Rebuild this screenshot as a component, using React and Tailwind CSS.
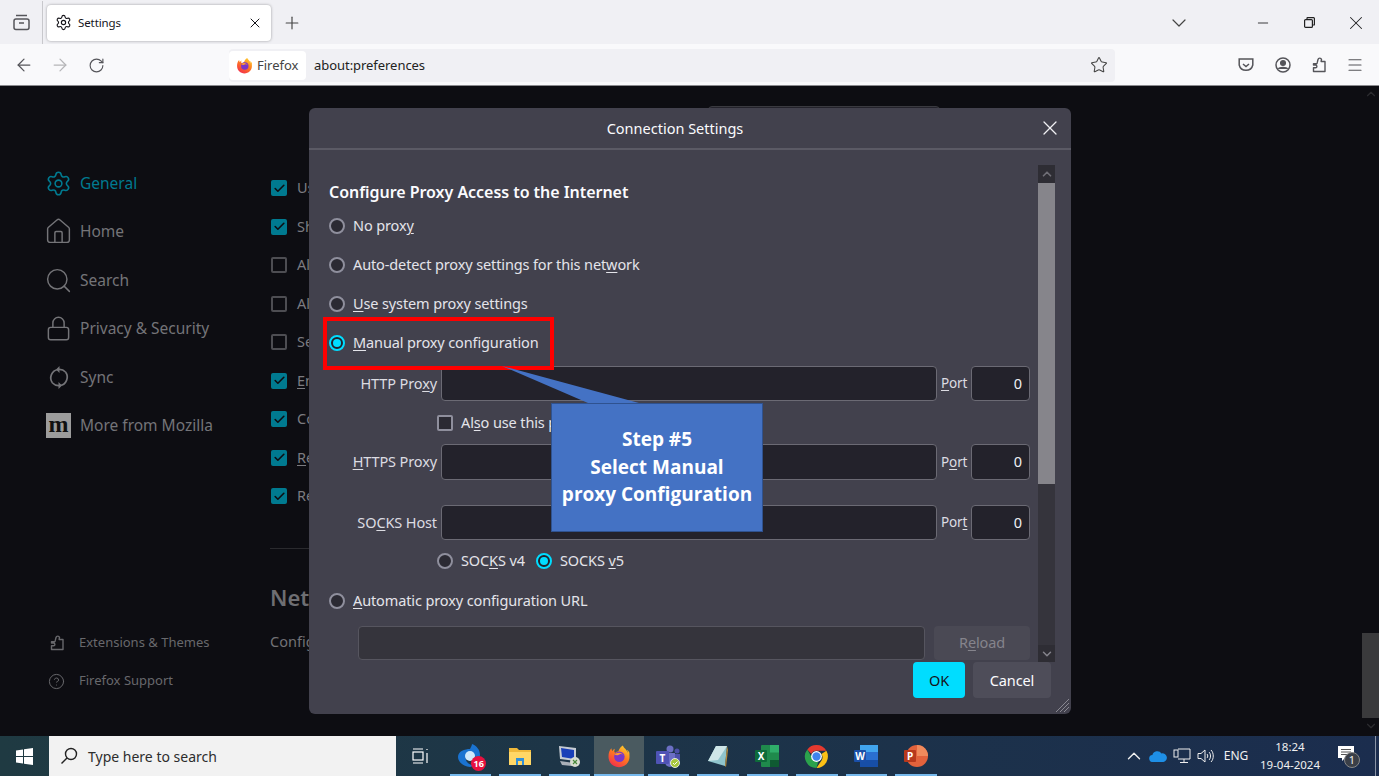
import React from "react";
import { Settings, House, Search, Lock, CircleHelp, X, Plus, ArrowLeft, ArrowRight, RotateCw, Star, ChevronDown, ChevronUp, Minus, Menu, Check } from "lucide-react";

const F = "font-['Noto_Sans',sans-serif]";
const BODY = "text-[14.500px] tracking-[-0.120px]";

function U({ children }) {
  return <span className="underline underline-offset-2 decoration-1">{children}</span>;
}

function PuzzleIcon({ size = 16, className = "", stroke = 1.4 }) {
  return (
    <svg className={`shrink-0 ${className}`} width={size} height={size} viewBox="0 0 16 16" fill="none" stroke="currentColor" strokeWidth={stroke} strokeLinejoin="round">
      <path d="M6.500 4.500 7 2.500a1.800 1.800 0 0 1 3.500 0l-.4 2H14v10H2.500v-3.700h2a1.400 1.400 0 0 0 0-2.800h-2V6.800h2.800c.8 0 1.100-.8 1.200-2.300z" />
    </svg>
  );
}

function SyncIcon() {
  return (
    <svg className="shrink-0" width="24" height="25" viewBox="0 0 24 25" fill="none" stroke="currentColor" strokeWidth="1.700">
      <path d="M18.500 7A8.500 8.500 0 0 0 11 4.500 8.500 8.500 0 0 0 5.500 18" />
      <path d="M5.500 18A8.500 8.500 0 0 0 13 20.500 8.500 8.500 0 0 0 18.500 7" />
      <path d="M12.500 1 9 4.500 12.500 8zM11.500 17l3.500 3.500-3.500 3.500z" fill="currentColor" stroke="none" />
    </svg>
  );
}

function FirefoxLogo({ size = 18, id = "a" }) {
  return (
    <svg className="shrink-0" width={size} height={size} viewBox="0 0 32 32">
      <defs>
        <linearGradient id={`ff${id}`} x1="0.8" y1="0" x2="0.2" y2="1">
          <stop offset="0" stopColor="#ffd02e" />
          <stop offset="0.45" stopColor="#ff7a1f" />
          <stop offset="1" stopColor="#f2294f" />
        </linearGradient>
      </defs>
      <path d="M30 12c-.7-1.800-2.200-3.700-3.400-4.300.9 1.800 1.500 3.400 1.700 4.600C26.500 7.600 22.700 5.800 21 2c-4 2.400-5.500 6.200-5.700 7.800-1.500.1-3 .8-3.800 1.800-.9-.6-1.200-.5-1.700-.7-.1-1.200-.1-2.600.6-4.500-1.800.9-3 2.500-3.400 3.300-.8-1-1-2.800-.9-3.900C3.300 8.100 2 12 2 17c0 7.800 6.300 14 14 14s14-6.200 14-14c0-1.700-.2-3.500-.1-5z" fill={`url(#ff${id})`} />
      <circle cx="16.500" cy="17" r="7" fill="#7a36c9" />
      <path d="M10 14c2-2 5-3.200 8-2 3 1.200 5 3.500 5 6 0-3-2.500-5-5.500-4.500-2 .4-2.500 1.500-4 1.500s-2.500-.5-3.500-1z" fill="#ff9a2e" />
    </svg>
  );
}

function Radio({ on }) {
  return (
    <span className={`w-4 h-4 rounded-full shrink-0 flex items-center justify-center border-2 ${on ? "border-[#00ddff] bg-[#23222b]" : "border-[#8f8f9d] bg-[#2b2a33]"}`}>
      {on && <span className="w-2 h-2 rounded-full bg-[#00ddff]" />}
    </span>
  );
}

function RadioRow({ on, children, className = "" }) {
  return (
    <div className={`h-6 flex items-center gap-2 text-[#e4e4ea] ${BODY} ${className}`}>
      <Radio on={on} />
      <span>{children}</span>
    </div>
  );
}

function ProxyRow({ label, port, className = "" }) {
  return (
    <div className={`flex items-center text-[#dcdce2] ${BODY} ${className}`}>
      <span className="w-[108px] text-right shrink-0 whitespace-nowrap">{label}</span>
      <span className="ml-1 w-[496px] h-full bg-[#23222b] border border-[#6b6a74] rounded-[4px] shrink-0" />
      <span className="ml-1 w-[26px] shrink-0 text-[13.500px] whitespace-nowrap">{port}</span>
      <span className="ml-1 w-[59px] h-full bg-[#23222b] border border-[#6b6a74] rounded-[4px] shrink-0 flex items-center justify-end pr-[7px] text-[#f0f0f4]">0</span>
    </div>
  );
}

function BgCheck({ on, children, className = "" }) {
  return (
    <div className={`h-6 flex items-center gap-[10px] text-[14.500px] text-[#7b7b80] whitespace-nowrap ${className}`}>
      <span className={`w-4 h-4 rounded-[2px] shrink-0 flex items-center justify-center ${on ? "bg-[#007a90]" : "border-2 border-[#4d4d52]"}`}>
        {on && <Check size={13} strokeWidth={3} color="#0d0d12" />}
      </span>
      <span>{children}</span>
    </div>
  );
}

function NavItem({ icon, children, active, className = "" }) {
  return (
    <div className={`h-8 flex items-center text-[15.500px] ${active ? "text-[#007a90]" : "text-[#747478]"} ${className}`}>
      <span className="w-[25px] mr-[9px] flex justify-center shrink-0">{icon}</span>
      <span className="pt-px">{children}</span>
    </div>
  );
}

function TaskIcon({ children, active, bar = true }) {
  return (
    <div className={`relative w-[49.500px] h-full flex items-center justify-center shrink-0 ${active ? "bg-[#4a5a60]" : ""}`}>
      {children}
      {bar && <span className={`absolute bottom-0 h-[2px] bg-[#76b9ed] ${active ? "left-0 right-0" : "left-[4px] right-[4px]"}`} />}
    </div>
  );
}

function TaskBar() {
  return (
    <div className="h-10 shrink-0 flex items-stretch bg-gradient-to-r from-[#1f3a42] to-[#1b2d4e] text-white">
      <div className="w-[49px] flex items-center justify-center shrink-0">
        <svg width="17" height="17" viewBox="0 0 17 17" fill="#fff"><path d="M0 2.400 7 1.400V8H0zM8 1.200 17 0v8H8zM0 9h7v6.600L0 14.600zM8 9h9v8l-9-1.200z" /></svg>
      </div>
      <div className="w-[347px] bg-[#f2f2f2] flex items-center shrink-0 pl-[11px] text-[#2d2d2d] text-[14px]">
        <svg width="18" height="18" viewBox="0 0 18 18" fill="none" stroke="#222" strokeWidth="1.400"><circle cx="11" cy="7" r="5.500" /><path d="M7 11 1.500 16.500" /></svg>
        <span className="ml-[10px]">Type here to search</span>
      </div>
      <TaskIcon bar={false}>
        <svg width="18" height="18" viewBox="0 0 18 18" fill="none" stroke="#fff" strokeWidth="1.200"><rect x="1" y="5" width="10" height="8" /><path d="M1 2h10M1 16h10M15 2v1M15 6v10" /></svg>
      </TaskIcon>
      <TaskIcon>
        <div className="relative w-[26px] h-[26px]">
          <svg width="26" height="26" viewBox="0 0 26 26"><path d="M15 1c5 2 8 6 8 11 0 2-1 3-3 3-3-3-8-5-11-1-1 3 1 7 6 8 1 1 0 2-2 2C7 24 1 19 1 14 1 8 8 6 13 6c1-2 2-4 2-5z" fill="#1a73d1" /><circle cx="13" cy="13" r="5" fill="#cfe8fb" /></svg>
          <span className="absolute right-[-3px] bottom-[-2px] w-[15px] h-[15px] rounded-full bg-[#e8103f] text-[9px] leading-[15px] text-center font-bold">16</span>
        </div>
      </TaskIcon>
      <TaskIcon>
        <svg width="24" height="22" viewBox="0 0 24 22"><path d="M1 3h8l2 2h12v15H1z" fill="#f0b93a" /><rect x="1" y="7" width="22" height="13" fill="#ffd766" /><path d="M8 13h8v7h-2v-4h-4v4H8z" fill="#2f8fd8" /></svg>
      </TaskIcon>
      <TaskIcon>
        <svg width="24" height="24" viewBox="0 0 24 24"><path d="M2 2 19 4v13L3 15z" fill="#c6ccd4" /><path d="M4 4 17 6v9L5 13z" fill="#1a3fb8" /><path d="M3 17l14 2-2 3-10-1z" fill="#aab0b8" /><circle cx="18" cy="18" r="5" fill="#d8dccf" /><path d="M16 20l4-4M16 16l4 4" stroke="#4a8a3c" strokeWidth="1.200" /></svg>
      </TaskIcon>
      <TaskIcon active>
        <FirefoxLogo size={24} id="b" />
      </TaskIcon>
      <TaskIcon>
        <svg width="26" height="24" viewBox="0 0 26 24"><circle cx="15" cy="5" r="3.500" fill="#6b6fc4" /><circle cx="22" cy="7" r="2.500" fill="#4b4fa8" /><path d="M10 9h10v9a5 5 0 0 1-10 0z" fill="#6b6fc4" /><path d="M20 10h5v7a3 3 0 0 1-5 2z" fill="#4b4fa8" /><rect x="1" y="7" width="13" height="13" rx="1" fill="#4f53b5" /><text x="7.500" y="17.500" textAnchor="middle" fontSize="10" fontWeight="700" fill="#fff" fontFamily="Noto Sans, sans-serif">T</text><circle cx="20" cy="19" r="4.500" fill="#a8c63c" stroke="#fff" strokeWidth="0.800" /><path d="M18 19l1.500 1.500L22.500 17.500" stroke="#fff" fill="none" strokeWidth="1" /></svg>
      </TaskIcon>
      <TaskIcon>
        <svg width="24" height="24" viewBox="0 0 24 24"><path d="M10 2h11l-2 20L2 17z" fill="#8fc4cc" /><path d="M10 2h11L12 16 2 17z" fill="#cfe6e8" /><path d="M21 2l1 4-2 17-1-1z" fill="#b58a3a" /></svg>
      </TaskIcon>
      <TaskIcon>
        <svg width="26" height="24" viewBox="0 0 26 24"><rect x="7" y="1" width="18" height="22" rx="1" fill="#1f8a4c" /><rect x="16" y="1" width="9" height="7.500" fill="#2fae6a" /><rect x="16" y="16" width="9" height="7" fill="#0f5a32" /><rect x="1" y="6" width="12" height="12" rx="1" fill="#0e6b3a" /><text x="7" y="16" textAnchor="middle" fontSize="10" fontWeight="700" fill="#fff" fontFamily="Noto Sans, sans-serif">X</text></svg>
      </TaskIcon>
      <TaskIcon>
        <svg width="25" height="25" viewBox="0 0 24 24"><path d="M12 1a11 11 0 0 1 9.500 5.500H12a5.500 5.500 0 0 0-5 3.200L3.200 5.200A11 11 0 0 1 12 1z" fill="#e5392f" /><path d="M21.500 6.500A11 11 0 0 1 12 23l5-7.500a5.500 5.500 0 0 0-.3-6z" fill="#fbc116" /><path d="M3.200 5.200 7.500 13a5.500 5.500 0 0 0 6.200 3.800L12 23A11 11 0 0 1 3.200 5.200z" fill="#2ba24c" /><circle cx="12" cy="12" r="5.200" fill="#fff" /><circle cx="12" cy="12" r="4" fill="#3f84ee" /></svg>
      </TaskIcon>
      <TaskIcon>
        <svg width="26" height="24" viewBox="0 0 26 24"><rect x="7" y="1" width="18" height="22" rx="1" fill="#2a6fd0" /><rect x="7" y="1" width="18" height="7" fill="#41a5ee" /><rect x="7" y="16" width="18" height="7" fill="#174ea6" /><rect x="1" y="6" width="12" height="12" rx="1" fill="#1a4fa8" /><text x="7" y="16" textAnchor="middle" fontSize="10" fontWeight="700" fill="#fff" fontFamily="Noto Sans, sans-serif">W</text></svg>
      </TaskIcon>
      <TaskIcon>
        <svg width="26" height="24" viewBox="0 0 26 24"><circle cx="14" cy="12" r="11" fill="#e2623c" /><path d="M14 1a11 11 0 0 1 11 11H14z" fill="#f08a5c" /><rect x="1" y="6" width="12" height="12" rx="1" fill="#b7381c" /><text x="7" y="16" textAnchor="middle" fontSize="10" fontWeight="700" fill="#fff" fontFamily="Noto Sans, sans-serif">P</text></svg>
      </TaskIcon>
      <div className="ml-auto flex items-center text-[#f0f0f0]">
        <span className="w-6 flex justify-center"><ChevronUp size={22} strokeWidth={1.500} /></span>
        <span className="w-6 flex justify-center">
          <svg width="18" height="12" viewBox="0 0 18 12"><path d="M4 12a3.500 3.500 0 0 1-.6-7A5 5 0 0 1 12.500 3.500 4.300 4.300 0 0 1 14.500 12z" fill="#1e8fe6" /></svg>
        </span>
        <span className="w-6 flex justify-center">
          <svg width="18" height="16" viewBox="0 0 18 16" fill="none" stroke="#eee" strokeWidth="1"><path d="M5 1h12v10H5M11 11v3M7 14.500h8" /><rect x="1" y="2" width="4" height="7" /></svg>
        </span>
        <span className="w-6 flex justify-center">
          <svg width="18" height="16" viewBox="0 0 18 16" fill="none" stroke="#eee" strokeWidth="1"><path d="M1 5.500h3L8 2v12l-4-3.500H1z" /><path d="M10 6c1 1 1 3 0 4M12 4c2 2 2 6 0 8M14 2c3 3 3 9 0 12" /></svg>
        </span>
        <span className="w-9 text-center text-[12px]">ENG</span>
        <span className="w-[72px] text-center text-[11.500px] leading-[18px]">18:24<br />19-04-2024</span>
        <span className="w-[42px] flex justify-center">
          <span className="relative w-5 h-5">
            <svg width="18" height="16" viewBox="0 0 18 16"><path d="M1 0h16v12H8l-3 3v-3H1z" fill="#fff" /><path d="M4 3.500h10M4 6h10M4 8.500h7" stroke="#555" /></svg>
            <span className="absolute left-[7px] top-[6px] w-[16px] h-[16px] rounded-full bg-[#3a3f48] border border-[#888] text-[11px] leading-[14px] text-center">1</span>
          </span>
        </span>
        <span className="w-px h-full bg-[#8a94a6] mr-[3px] ml-[7px]" />
      </div>
    </div>
  );
}

function Dialog() {
  return (
    <div className={`absolute left-[309px] top-[108px] w-[762px] h-[606px] bg-[#42414d] rounded-[6px] flex flex-col`}>
      <div className="relative h-[42px] shrink-0 border-b-2 border-[#5b5a65] flex items-center justify-center text-[14.500px] text-[#fbfbfe] pr-[30px] pt-[2px]">
        Connection Settings
        <X size={24} strokeWidth={1.300} className="absolute right-[9px] top-[8px] text-[#f0f0f4]" />
      </div>
      <div className="h-[512px] shrink-0 flex overflow-hidden pl-5">
        <div className="w-[709px] shrink-0 flex flex-col">
          <div className="mt-[30px] h-6 flex items-center text-[16px] font-semibold tracking-[-0.040px] text-[#fbfbfe]">Configure Proxy Access to the Internet</div>
          <RadioRow className="mt-[10px]">No prox<U>y</U></RadioRow>
          <RadioRow className="mt-[15px]">Auto-detect proxy settings for this net<U>w</U>ork</RadioRow>
          <RadioRow className="mt-[15px]"><U>U</U>se system proxy settings</RadioRow>
          <RadioRow on className="mt-[15px]"><U>M</U>anual proxy configuration</RadioRow>
          <ProxyRow className="mt-[11px] h-[35px]" label={<>HTTP Pro<U>x</U>y</>} port={<><U>P</U>ort</>} />
          <div className={`mt-[10px] h-6 flex items-center gap-2 pl-[108px] text-[#e4e4ea] ${BODY}`}>
            <span className="w-4 h-4 rounded-[2px] border-2 border-[#8f8f9d] bg-[#2b2a33] shrink-0" />
            <span>Al<U>s</U>o use this proxy for HTTPS</span>
          </div>
          <ProxyRow className="mt-[9px] h-9" label={<><U>H</U>TTPS Proxy</>} port={<>P<U>o</U>rt</>} />
          <ProxyRow className="mt-[25px] h-[35px]" label={<>SO<U>C</U>KS Host</>} port={<>Por<U>t</U></>} />
          <div className={`mt-[9px] h-6 flex items-center pl-[108px] text-[#e4e4ea] ${BODY}`}>
            <Radio />
            <span className="ml-2 w-[67px]">SOC<U>K</U>S v4</span>
            <span className="ml-2"><Radio on /></span>
            <span className="ml-2">SOCKS <U>v</U>5</span>
          </div>
          <RadioRow className="mt-4"><U>A</U>utomatic proxy configuration URL</RadioRow>
          <div className="mt-[13px] h-[34px] shrink-0 flex pl-[29px]">
            <span className="w-[567px] h-full bg-[#35343c] border border-[#56555f] rounded-[4px]" />
            <span className={`ml-[9px] w-[96px] h-full bg-[#4a4954] rounded-[4px] flex items-center justify-center text-[#85848c] ${BODY}`}>R<U>e</U>load</span>
          </div>
        </div>
        <div className="mt-[15px] w-[17px] shrink-0 bg-[#35343c] flex flex-col">
          <span className="h-[18px] bg-[#2e2d34] flex items-center justify-center text-[#6f6e76]"><ChevronUp size={14} strokeWidth={3} /></span>
          <span className="h-[301px] bg-[#86858b]" />
          <span className="mt-auto h-[17px] bg-[#2e2d34] flex items-center justify-center text-[#85848c]"><ChevronDown size={14} strokeWidth={2.500} /></span>
        </div>
      </div>
      <div className={`h-9 shrink-0 flex justify-end gap-2 pr-5 ${BODY}`}>
        <span className="w-[52px] bg-[#00ddff] text-[#15141a] rounded-[4px] flex items-center justify-center pt-px">OK</span>
        <span className="w-[78px] bg-[#4e4d59] text-[#fbfbfe] rounded-[4px] flex items-center justify-center pt-px">Cancel</span>
      </div>
      <svg className="absolute right-[1px] bottom-[1px]" width="15" height="15" viewBox="0 0 15 15" stroke="#8a8992" strokeWidth="1"><path d="M14 1 1 14M14 5 5 14M14 9 9 14" /></svg>
    </div>
  );
}

export default function App() {
  return (
    <div className={`relative w-[1379px] h-[776px] overflow-hidden flex flex-col bg-[#0d0d12] ${F}`}>
      <div className="h-11 shrink-0 bg-[#f0f0f4] flex items-center text-[#15141a] pt-px">
        <div className="w-[43px] h-full flex items-center justify-center border-r border-[#c8c8cc] shrink-0">
          <svg width="17" height="17" viewBox="0 0 17 17" fill="none" stroke="#55555a" strokeWidth="1.500"><rect x="1" y="5" width="15" height="10.500" rx="2" /><path d="M3 1.500h11M6 9h5" /></svg>
        </div>
        <div className="ml-[4px] w-[224px] h-9 bg-white rounded-[4px] shadow-[0_0_3px_rgba(0,0,0,0.35)] flex items-center pl-[8px] pr-[8px] shrink-0">
          <Settings size={17} strokeWidth={1.600} />
          <span className="ml-[6px] text-[11.500px] tracking-[-0.100px]">Settings</span>
          <X size={16} strokeWidth={1.500} className="ml-auto" />
        </div>
        <span className="ml-[3px] w-9 flex justify-center text-[#444]"><Plus size={20} strokeWidth={1.400} /></span>
        <span className="ml-[851px] w-9 flex justify-center text-[#444]"><ChevronDown size={24} strokeWidth={1.200} /></span>
        <span className="ml-[43px] w-[46px] flex justify-center text-[#222]"><Minus size={16} strokeWidth={1.300} /></span>
        <span className="w-[46px] flex justify-center">
          <svg width="11" height="11" viewBox="0 0 11 11" fill="none" stroke="#222" strokeWidth="1.200"><rect x="0.600" y="2.600" width="7.800" height="7.800" rx="1" /><path d="M3 2.500V1.200A.6.600 0 0 1 3.600.6h6a.8.800 0 0 1 .8.800v6a.6.600 0 0 1-.6.600H8.500" /></svg>
        </span>
        <span className="w-[47px] flex justify-center text-[#222]"><X size={22} strokeWidth={1.100} /></span>
      </div>
      <div className="h-[42px] shrink-0 bg-[#f9f9fb] border-b border-[#8a8a8e] flex items-center text-[#55555a] pt-px">
        <span className="ml-[6px] w-9 flex justify-center"><ArrowLeft size={20} strokeWidth={1.500} /></span>
        <span className="w-9 flex justify-center text-[#b5b5b8]"><ArrowRight size={20} strokeWidth={1.500} /></span>
        <span className="w-[37px] flex justify-center"><RotateCw size={17} strokeWidth={1.600} /></span>
        <div className="ml-[114px] w-[886px] h-[33px] rounded-[4px] bg-[#f0f0f4] flex items-center text-[13px] text-[#222]">
          <span className="w-[77px] h-[29px] ml-0 bg-white rounded-[4px] flex items-center pl-[7px] gap-[4px] shrink-0 text-[#444]">
            <FirefoxLogo size={17} id="a" />
            <span className="pt-px">Firefox</span>
          </span>
          <span className="ml-2 pt-px tracking-[-0.050px]">about:preferences</span>
          <Star size={18} strokeWidth={1.400} className="ml-auto mr-[7px] text-[#444]" />
        </div>
        <span className="ml-[113px] w-9 flex justify-center">
          <svg width="16" height="15" viewBox="0 0 16 15" fill="none" stroke="#55555a" strokeWidth="1.500"><path d="M1.200 1h13.600v6a7 7 0 0 1-13.600 0z" /><path d="M5 6l3 2.500L11 6" /></svg>
        </span>
        <span className="w-[37px] flex justify-center">
          <svg width="16" height="16" viewBox="0 0 16 16" fill="none" stroke="#55555a" strokeWidth="1.500"><circle cx="8" cy="8" r="7" /><circle cx="8" cy="6" r="2.300" fill="#55555a" /><path d="M3.500 12c1-2 8-2 9 0" fill="#55555a" /></svg>
        </span>
        <span className="w-9 flex justify-center"><PuzzleIcon size={16} /></span>
        <span className="w-9 flex justify-center"><Menu size={18} strokeWidth={1.500} /></span>
      </div>

      <div className="flex-1 min-h-0 flex">
        <div className="w-[270px] shrink-0 pl-[46px] pt-[81px] pb-[43px] flex flex-col">
          <NavItem active icon={<Settings size={27} strokeWidth={1.400} className="shrink-0" />}>General</NavItem>
          <NavItem className="mt-[16.500px]" icon={<House size={29} strokeWidth={1.200} className="shrink-0" />}>Home</NavItem>
          <NavItem className="mt-[16.500px]" icon={<Search size={29} strokeWidth={1.200} className="shrink-0" />}>Search</NavItem>
          <NavItem className="mt-[16.500px]" icon={<Lock size={27} strokeWidth={1.300} className="shrink-0" />}>Privacy &amp; Security</NavItem>
          <NavItem className="mt-[16.500px]" icon={<SyncIcon />}>Sync</NavItem>
          <NavItem className="mt-[16.500px]" icon={<span className="w-[25px] h-[25px] shrink-0 bg-[#9c9c9c] text-[#111] flex items-center justify-center text-[24px] leading-none font-bold font-['Liberation_Serif',serif] pb-[4px]">m</span>}>More from Mozilla</NavItem>
          <div className="mt-auto h-6 flex items-center text-[13px] text-[#68686c] pl-[3px]">
            <PuzzleIcon size={16} className="mr-[14px]" />Extensions &amp; Themes
          </div>
          <div className="mt-[14px] h-6 flex items-center text-[13px] text-[#68686c] pl-[2px]">
            <CircleHelp size={17} strokeWidth={1.400} className="mr-[14px]" />Firefox Support
          </div>
        </div>
        <div className="flex-1 min-w-0 overflow-hidden pt-5 flex flex-col">
          <div className="ml-[438px] w-[232px] h-8 shrink-0 bg-[#23222b] border border-[#3a3a40] rounded-[4px]" />
          <div className="ml-[1px] flex flex-col">
            <BgCheck on className="mt-[38px]">Use autoscrolling</BgCheck>
            <BgCheck on className="mt-[14.500px]">Show a touch keyboard when necessary</BgCheck>
            <BgCheck className="mt-[14.500px]">Always use the cursor keys to navigate within pages</BgCheck>
            <BgCheck className="mt-[14.500px]">Always underline links</BgCheck>
            <BgCheck className="mt-[14.500px]">Search for text when you start typing</BgCheck>
            <BgCheck on className="mt-[14.500px]"><U>E</U>nable picture-in-picture video controls</BgCheck>
            <BgCheck on className="mt-[14.500px]">Control media via keyboard, headset, or virtual interface</BgCheck>
            <BgCheck on className="mt-[14.500px]"><U>R</U>ecommend extensions as you browse</BgCheck>
            <BgCheck on className="mt-[14.500px]">Recommend features as you browse</BgCheck>
          </div>
          <div className="mt-10 w-[664px] h-px bg-[#2a2a2e]" />
          <div className="mt-[33px] h-[30px] flex items-center text-[22px] font-semibold text-[#6e6e72] whitespace-nowrap">Network Settings</div>
          <div className="mt-[18px] h-6 flex items-center text-[14.500px] text-[#727276] whitespace-nowrap">Configure how Firefox connects to the internet.</div>
        </div>
        <div className="w-[17px] shrink-0 flex flex-col items-center">
          <ChevronUp size={14} strokeWidth={2} className="mt-[1px] text-[#2c2c30]" />
          <span className="mt-[532px] w-full h-[85px] bg-[#3a3a3c]" />
          <ChevronDown size={14} strokeWidth={2} className="mt-[1px] text-[#2c2c30]" />
        </div>
      </div>

      <TaskBar />

      <Dialog />

      <div className="absolute left-[323px] top-[317px] w-[231px] h-[53px] border-4 border-[#ff0000]" />
      <svg className="absolute left-[500px] top-[364px]" width="150" height="42" viewBox="0 0 150 42">
        <path d="M2 2 139 39H88z" fill="#4472c4" />
      </svg>
      <div className="absolute left-[551px] top-[403px] w-[212px] h-[129px] bg-[#4472c4] border border-[#2f528f] flex flex-col items-center justify-center text-white text-[19px] leading-[27.500px] font-bold text-center font-['Open_Sans',sans-serif]">
        <span>Step #5</span>
        <span>Select Manual</span>
        <span>proxy Configuration</span>
      </div>
    </div>
  );
}
